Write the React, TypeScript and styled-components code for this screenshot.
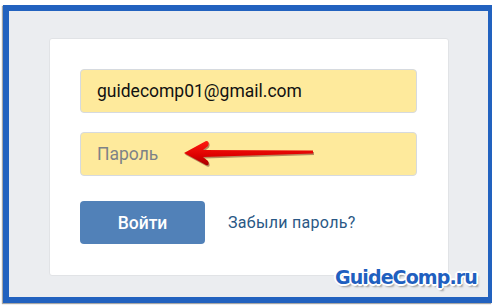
import styled, { createGlobalStyle } from "styled-components";

const GlobalStyle = createGlobalStyle`
  html, body {
    margin: 0;
    padding: 0;
    background: #ffffff;
  }
  body {
    font-family: Roboto, "Liberation Sans", Arial, sans-serif;
  }
  * {
    box-sizing: border-box;
  }
`;

const ArrowIcon = () => (
  <svg width="140" height="34" viewBox="0 0 140 34">
    <defs>
      <linearGradient id="arrowFill" x1="0" y1="0" x2="0" y2="1">
        <stop offset="0" stopColor="#ff1a10" />
        <stop offset="0.6" stopColor="#dd0000" />
        <stop offset="1" stopColor="#a80000" />
      </linearGradient>
    </defs>
    <path
      d="M4,17 L26,5 Q30,5 28,10 L23,14 L133,14.5 L133,17.5 L23,21 L28,25 Q30,30 26,29 Z"
      fill="#7a3a2a"
      opacity="0.55"
      transform="translate(1,1.5)"
    />
    <path
      d="M4,17 L26,5 Q30,5 28,10 L23,14 L133,14.5 L133,17.5 L23,21 L28,25 Q30,30 26,29 Z"
      fill="url(#arrowFill)"
    />
  </svg>
);

const App = () => {
  return (
    <>
      <GlobalStyle />
      <StyledPage>
        <StyledFrame>
          <StyledCard>
            <StyledField readOnly value="guidecomp01@gmail.com" />
            <StyledFieldWrap>
              <StyledField readOnly placeholder="Пароль" />
              <StyledArrow>
                <ArrowIcon />
              </StyledArrow>
            </StyledFieldWrap>
            <StyledActions>
              <StyledButton>Войти</StyledButton>
              <StyledLink>Забыли пароль?</StyledLink>
            </StyledActions>
          </StyledCard>
        </StyledFrame>
        <StyledWatermark>GuideComp.ru</StyledWatermark>
      </StyledPage>
    </>
  );
};

const StyledPage = styled.div`
  position: relative;
  width: 498px;
  height: 307px;
  padding: 5px 6px 4px 3px;
`;

const StyledFrame = styled.div`
  height: 100%;
  border: 6px solid #2262bf;
  border-right-width: 4px;
  background: #ebedf0;
  padding: 27px 39px 21px 40px;
  box-shadow: -1px 1px 1px rgba(0, 0, 0, 0.35);
`;

const StyledCard = styled.div`
  height: 100%;
  background: #ffffff;
  border: 1px solid #e1e3e6;
  border-radius: 3px;
  padding: 30px 31px 0 30px;
  display: flex;
  flex-direction: column;
  gap: 19px;
`;

const StyledFieldWrap = styled.div`
  position: relative;
`;

const StyledField = styled.input`
  display: block;
  width: 100%;
  height: 44px;
  background: #feea9c;
  border: 1px solid #d6dadf;
  border-radius: 4px;
  padding: 0 16px;
  font-family: Roboto, "Liberation Sans", Arial, sans-serif;
  font-size: 17.5px;
  color: #111111;
  outline: none;

  &::placeholder {
    color: #7d8287;
  }
`;

const StyledArrow = styled.div`
  position: absolute;
  left: 100px;
  top: 4px;
  line-height: 0;
  pointer-events: none;
`;

const StyledActions = styled.div`
  display: flex;
  align-items: center;
  gap: 23px;
  margin-top: 6px;
`;

const StyledButton = styled.button`
  width: 125px;
  height: 43px;
  border: none;
  border-radius: 4px;
  background: #5181b8;
  color: #ffffff;
  font-family: Roboto, "Liberation Sans", Arial, sans-serif;
  font-size: 17.5px;
  font-weight: 500;
  cursor: pointer;
`;

const StyledLink = styled.a`
  color: #2a5885;
  font-size: 16px;
  letter-spacing: 0.3px;
  cursor: pointer;
`;

const StyledWatermark = styled.div`
  position: absolute;
  left: 335px;
  top: 266px;
  font-family: "DejaVu Sans", Verdana, sans-serif;
  font-weight: bold;
  font-size: 19px;
  letter-spacing: -0.9px;
  color: #1f5fbf;
  text-shadow:
    -1px -1px 0 #fff,
    1px -1px 0 #fff,
    -1px 1px 0 #fff,
    1px 1px 0 #fff,
    0 -2px 0 #fff,
    0 2px 0 #fff,
    -2px 0 0 #fff,
    2px 0 0 #fff,
    2px 3px 2px rgba(0, 0, 0, 0.35);
`;

export default App;
